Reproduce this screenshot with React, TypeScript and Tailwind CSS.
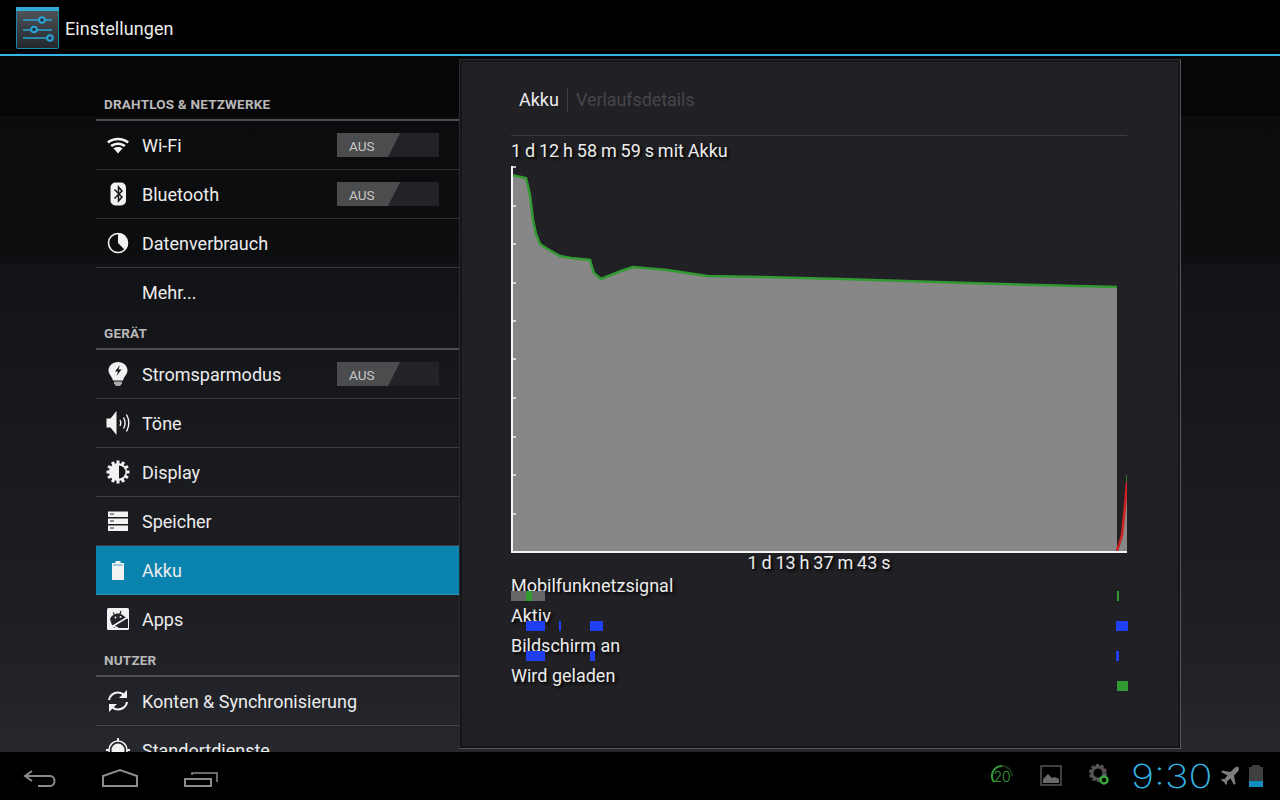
import React from "react";

const W = "#f2f2f2";

function SettingsIcon() {
  return (
    <svg width="43" height="42" viewBox="0 0 43 42">
      <defs>
        <linearGradient id="sg" x1="0" y1="0" x2="0" y2="1">
          <stop offset="0" stopColor="#53565a" />
          <stop offset="1" stopColor="#23282c" />
        </linearGradient>
      </defs>
      <rect x="0.5" y="0.5" width="42" height="41" rx="1" fill="url(#sg)" stroke="#1c86ad" />
      <rect x="0" y="0" width="43" height="4" fill="#33a9d4" />
      <g stroke="#2aa4d6" strokeWidth="1.5" fill="none">
        <path d="M7 13H36M7 23H36M7 31H37" />
        <circle cx="26" cy="13" r="2.800" fill="#22303a" strokeWidth="2" />
        <circle cx="18" cy="22.500" r="2.800" fill="#22303a" strokeWidth="2" />
        <circle cx="34" cy="31" r="2.800" fill="#22303a" strokeWidth="2" />
      </g>
    </svg>
  );
}

const iconProps = { width: 26, height: 26, viewBox: "0 0 26 26" };

function Wifi() {
  return (
    <svg {...iconProps}>
      <path d="M2 9.500C8.500 4.500 17.500 4.500 24 9.500L22.300 11.400C16.700 7.200 9.300 7.200 3.700 11.400Z" fill={W} />
      <path d="M5.300 13C10 9.500 16 9.500 20.700 13L19 14.900C15.300 12.200 10.700 12.200 7 14.900Z" fill={W} />
      <path d="M8.400 16.300C11.200 14.400 14.800 14.400 17.600 16.300L13 21.500Z" fill={W} />
    </svg>
  );
}
function Bluetooth() {
  return (
    <svg {...iconProps}>
      <rect x="5.500" y="1.500" width="15.500" height="23" rx="5" fill={W} />
      <path d="M9.500 8.500L17 16L13.500 20V6L17 10L9.500 17.500" fill="none" stroke="#15161a" strokeWidth="1.500" />
    </svg>
  );
}
function DataUsage() {
  return (
    <svg {...iconProps}>
      <circle cx="13" cy="13" r="9.500" fill="none" stroke={W} strokeWidth="1.600" />
      <path d="M13 3A10 10 0 0 1 20 20L13 13Z" fill={W} />
    </svg>
  );
}
function Bulb() {
  return (
    <svg {...iconProps}>
      <path d="M13 1C7.500 1 3.500 5 3.500 9.500C3.500 13 7 15.500 8 19.500H18C19 15.500 22.500 13 22.500 9.500C22.500 5 18.500 1 13 1Z" fill={W} />
      <path d="M15 4L10 10.500H13L11.500 15L16.500 8.500H13.500Z" fill="#15161a" />
      <path d="M9 20.500H17V22.500L15 25H11L9 22.500Z" fill="#aaa" />
    </svg>
  );
}
function Speaker() {
  return (
    <svg {...iconProps}>
      <path d="M1.500 8.500H5.500L11.500 1V25L5.500 17.500H1.500Z" fill={W} />
      <path d="M15 10C16 12 16 14 15 16M18.500 7.500C20.500 11 20.500 15 18.500 18.500M21.500 4.500C24.500 10 24.500 16 21.500 21.500" fill="none" stroke={W} strokeWidth="1.400" />
    </svg>
  );
}
function DisplayIcon() {
  const teeth = Array.from({ length: 12 }, (_, i) => i * 30);
  return (
    <svg {...iconProps}>
      <g fill={W}>
        {teeth.map((a) => (
          <rect key={a} x="11.500" y="1.500" width="3" height="4" transform={`rotate(${a} 13 13)`} />
        ))}
      </g>
      <circle cx="13" cy="13" r="9" fill={W} />
      <path d="M14 6.500A6.500 6.500 0 0 1 14 19.500Z" fill="#16171b" />
    </svg>
  );
}
function Storage() {
  return (
    <svg {...iconProps}>
      <g fill={W}>
        <rect x="3" y="3.500" width="20" height="5.500" />
        <rect x="3" y="10.500" width="20" height="5.500" />
        <rect x="3" y="17.500" width="20" height="5.500" />
      </g>
      <path d="M5 6H9M5 13H9M5 20H9" stroke="#333" strokeWidth="1" />
    </svg>
  );
}
function Battery() {
  return (
    <svg {...iconProps}>
      <path d="M10.500 4H15.500V6H19V23H7V6H10.500Z" fill={W} />
      <path d="M8 7H18V9H8Z" fill="#0a83af" opacity="0.35" />
    </svg>
  );
}
function AppsIcon() {
  return (
    <svg {...iconProps}>
      <rect x="2" y="2" width="22" height="22" rx="1.500" fill={W} />
      <path d="M5 13.500C6 9.500 11 6.500 16 8L23 13V22H9L7 19Z" fill="#23242a" />
      <path d="M8 6.500L10 9.500M16 5L15 8" stroke="#23242a" strokeWidth="1.200" />
      <circle cx="10.500" cy="11.500" r="1" fill={W} />
      <circle cx="15.500" cy="11" r="1" fill={W} />
      <path d="M3 23L23 11" stroke={W} strokeWidth="1.500" />
      <path d="M8 20L13 22" stroke={W} strokeWidth="1.500" />
    </svg>
  );
}
function SyncIcon() {
  return (
    <svg {...iconProps}>
      <path d="M4 12C4.500 7.500 8.500 4.500 13 4.500C15.500 4.500 17.500 5.500 19 7" fill="none" stroke={W} strokeWidth="2.200" />
      <path d="M22 2V10H14Z" fill={W} />
      <path d="M22 14C21.500 18.500 17.500 21.500 13 21.500C10.500 21.500 8.500 20.500 7 19" fill="none" stroke={W} strokeWidth="2.200" />
      <path d="M4 24V16H12Z" fill={W} />
    </svg>
  );
}
function LocationIcon() {
  return (
    <svg {...iconProps}>
      <circle cx="13" cy="13" r="6.500" fill={W} />
      <circle cx="13" cy="13" r="9" fill="none" stroke={W} strokeWidth="1.500" />
      <path d="M13 1V4M13 22V25M1 13H4M22 13H25" stroke={W} strokeWidth="2" />
    </svg>
  );
}

function Toggle() {
  return (
    <div className="relative w-[102px] h-6 bg-[#232327] mr-5 shrink-0">
      <div className="absolute inset-0 bg-[#4b4c4e] [clip-path:polygon(0_0,62%_0,50%_100%,0_100%)]" />
      <span className="absolute left-3 top-[1px] h-6 flex items-center text-[13.5px] text-[#c8c8c8]">AUS</span>
    </div>
  );
}

function Header({ label, tall }: { label: string; tall?: boolean }) {
  return (
    <div
      className={`${tall ? "h-[34px]" : "h-[33px]"} flex items-center pl-2 pt-[2px] border-b-2 border-[#4c4d50] text-[13.5px] font-bold text-[#b9b9b9] tracking-[0.2px]`}
    >
      {label}
    </div>
  );
}

function Row({
  icon,
  label,
  toggle,
  sep = true,
  active,
}: {
  icon?: React.ReactNode;
  label: string;
  toggle?: boolean;
  sep?: boolean;
  active?: boolean;
}) {
  return (
    <div
      className={`flex items-center shrink-0 ${sep ? "h-[49px] border-b border-white/15" : "h-12"} ${
        active ? "bg-[#0a83af]" : ""
      }`}
    >
      <div className="w-[46px] pr-[2px] flex justify-center shrink-0">{icon}</div>
      <span className="flex-1 text-[18px] text-[#ececec]">{label}</span>
      {toggle && <Toggle />}
    </div>
  );
}

const bandBg =
  "bg-[linear-gradient(180deg,#060607_0px,#060607_60px,#0b0c0e_60px,#0d0e10_205px,#121317_210px,#15161a_290px,#17181c_340px,#1b1c20_460px,#1e1f24_560px,#212328_640px,#26282d_696px)]";

const curve =
  "0,9 15,12 17,20 19,29 22,54 25,68 29,78 35,82 49,90 60,92 79,94 81,101 83,107 90,113 110,105 122,101 156,104 196,110 249,111 330,113 489,118 606,121";
const ticks = [0, 39, 77, 116, 154, 192, 231, 270, 308, 347];

function Chart() {
  return (
    <svg width="616" height="387" viewBox="0 0 616 387" className="block">
      <polygon points={`${curve} 606,385 0,385`} fill="#878787" />
      <polygon points="606,385 611,369 616,316 616,385" fill="#878787" />
      <polyline points={curve} fill="none" stroke="#339933" strokeWidth="2.500" />
      <polyline points="606,385 611,369 614,340 616,316" fill="none" stroke="#cc2222" strokeWidth="2.500" />
      <path d="M616 309V316" stroke="#339933" strokeWidth="1.500" />
      <path d="M1 0V387M0 386H616" stroke="#f4f4f4" strokeWidth="2" />
      {ticks.map((t) => (
        <path key={t} d={`M2 ${t + 1}H5`} stroke="#f4f4f4" strokeWidth="1.500" />
      ))}
    </svg>
  );
}

const textShadow = "[text-shadow:2px_2px_3px_#000]";

function Track({ label, bars }: { label: string; bars: { x: number; w: number; c: string }[] }) {
  return (
    <div className={`relative h-[30px] pb-[2px] flex items-center text-[18px] text-[#ececec] ${textShadow}`}>
      {label}
      {bars.map((b, i) => (
        <div
          key={i}
          className="absolute bottom-0 h-2.5"
          style={{ left: b.x, width: b.w, backgroundColor: b.c }}
        />
      ))}
    </div>
  );
}

const BLUE = "#1f3ff0";
const GREEN = "#339933";

function BatteryPanel() {
  return (
    <div className="w-[722px] my-[3px] border border-t-[#2a2b2e] border-l-[#2a2b2e] border-r-[#55565a] border-b-[#55565a] flex">
      <div className="flex-1 border-2 border-[#141518] bg-[#212125] pl-[49px] pr-[51px] flex flex-col">
        <div className="h-[74px] flex items-center border-b border-[#3c3d40]">
          <div className="flex items-center h-6 ml-2 mt-[2px]">
            <span className="text-[18px] text-[#ececec] pr-2">Akku</span>
            <div className="w-px h-6 bg-[#3c3d40]" />
            <span className="text-[18px] text-[#45464a] pl-2 -tracking-[0.07px]">Verlaufsdetails</span>
          </div>
        </div>
        <div className={`h-[30px] pb-[2px] flex items-center text-[18px] text-[#ececec] [word-spacing:-0.6px] ${textShadow}`}>
          1 d 12 h 58 m 59 s mit Akku
        </div>
        <Chart />
        <div className={`h-5 flex items-center justify-center text-[18px] text-[#ececec] -mt-[1px] [word-spacing:-0.6px] ${textShadow}`}>
          1 d 13 h 37 m 43 s
        </div>
        <div className="-mt-[1px]">
          <Track
            label="Mobilfunknetzsignal"
            bars={[
              { x: 0, w: 34, c: "#666666" },
              { x: 15, w: 6, c: GREEN },
              { x: 606, w: 2, c: GREEN },
            ]}
          />
          <Track
            label="Aktiv"
            bars={[
              { x: 15, w: 19, c: BLUE },
              { x: 48, w: 2, c: BLUE },
              { x: 79, w: 13, c: BLUE },
              { x: 605, w: 12, c: BLUE },
            ]}
          />
          <Track
            label="Bildschirm an"
            bars={[
              { x: 15, w: 19, c: BLUE },
              { x: 79, w: 5, c: BLUE },
              { x: 605, w: 3, c: BLUE },
            ]}
          />
          <Track label="Wird geladen" bars={[{ x: 606, w: 11, c: GREEN }]} />
        </div>
      </div>
    </div>
  );
}

function StatusBar() {
  return (
    <div className="h-12 shrink-0 bg-black flex items-center">
      <svg width="260" height="48" viewBox="0 0 260 48" className="shrink-0">
        <g fill="none" stroke="#8c8c8c" strokeWidth="2">
          <path d="M26 24H50C56 24 56 34 50 34H38" />
          <path d="M32 19L25 24L32 29" />
          <path d="M103 34V24L120 18L137 24V34Z" />
          <path d="M185 27H211V34H185Z" />
          <path d="M192 23V21H217V30" strokeWidth="1.500" />
        </g>
      </svg>
      <div className="flex-1" />
      <div className="flex items-center">
        <div className="relative w-6 h-6 mr-[26px] flex items-center justify-center">
          <svg width="24" height="24" viewBox="0 0 24 24" className="absolute inset-0">
            <path d="M4 18A10 10 0 0 1 12 2" fill="none" stroke="#2f9a35" strokeWidth="2" />
            <path d="M12 2A10 10 0 0 1 22 12" fill="none" stroke="#143016" strokeWidth="2" />
          </svg>
          <span className="relative text-[14px] text-[#39a53c] font-['Inter',sans-serif] font-light">20</span>
        </div>
        <svg width="24" height="24" viewBox="0 0 24 24" className="mr-[24px]">
          <rect x="1" y="2" width="20" height="19" fill="none" stroke="#555" strokeWidth="1.500" />
          <path d="M3 19V15L8 10L12 14L15 13L19 15V19Z" fill="#6a6a6a" />
        </svg>
        <svg width="24" height="26" viewBox="0 0 24 26" className="mr-[19px]">
          <circle cx="10" cy="10" r="7" fill="none" stroke="#555" strokeWidth="4" strokeDasharray="3 1.400" />
          <circle cx="10" cy="10" r="6" fill="none" stroke="#555" strokeWidth="3" />
          <circle cx="16" cy="17" r="3.500" fill="#0a0a0a" stroke="#3aa63a" strokeWidth="2.500" />
        </svg>
        <span className="w-[80px] text-[33px] leading-none text-[#33b5e5] font-['Inter',sans-serif] font-extralight scale-x-[1.2] origin-left mr-[9px]">
          9:30
        </span>
        <svg width="20" height="20" viewBox="0 0 20 20" className="mr-[9px]">
          <path d="M18.500 1C17 0.500 15 1.500 14 2.500L10.500 6L2.500 4.500L1 6L7.500 9.500L4.500 13H2L1 14L4 16L6 19L7 18V15.500L10.500 12.500L14 19L15.500 17.500L14 9.500L17.500 6C18.500 5 19.500 3 18.500 1Z" fill="#7d7d7d" />
        </svg>
        <div className="w-[14px] h-[22px] mr-[17px] -mt-[1px] flex flex-col items-center">
          <div className="w-[8px] h-[2px] bg-[#3c3c3c]" />
          <div className="w-[14px] flex-1 bg-[#3f3f3f]" />
          <div className="w-[14px] h-[6px] bg-[#0f8cc2]" />
        </div>
      </div>
    </div>
  );
}

export default function App() {
  return (
    <div className="w-[1280px] h-[800px] flex flex-col bg-black overflow-hidden font-['Roboto','Noto_Sans',sans-serif]">
      <div className="h-[56px] shrink-0 border-b-2 border-[#33b5e5] bg-black flex items-center pl-4 pt-[2px]">
        <SettingsIcon />
        <span className="ml-[6px] text-[18px] text-[#ececec] tracking-[0.08px]">Einstellungen</span>
      </div>
      <div className={`h-[696px] flex overflow-hidden ${bandBg}`}>
        <div className="ml-[96px] w-[363px] shrink-0 pt-8 h-[722px]">
          <Header label="DRAHTLOS & NETZWERKE" />
          <Row icon={<Wifi />} label="Wi-Fi" toggle />
          <Row icon={<Bluetooth />} label="Bluetooth" toggle />
          <Row icon={<DataUsage />} label="Datenverbrauch" />
          <Row label="Mehr..." sep={false} />
          <Header label="GERÄT" tall />
          <Row icon={<Bulb />} label="Stromsparmodus" toggle />
          <Row icon={<Speaker />} label="Töne" />
          <Row icon={<DisplayIcon />} label="Display" />
          <Row icon={<Storage />} label="Speicher" />
          <Row icon={<Battery />} label="Akku" active />
          <Row icon={<AppsIcon />} label="Apps" sep={false} />
          <Header label="NUTZER" tall />
          <Row icon={<SyncIcon />} label="Konten & Synchronisierung" />
          <Row icon={<LocationIcon />} label="Standortdienste" />
        </div>
        <BatteryPanel />
      </div>
      <StatusBar />
    </div>
  );
}
